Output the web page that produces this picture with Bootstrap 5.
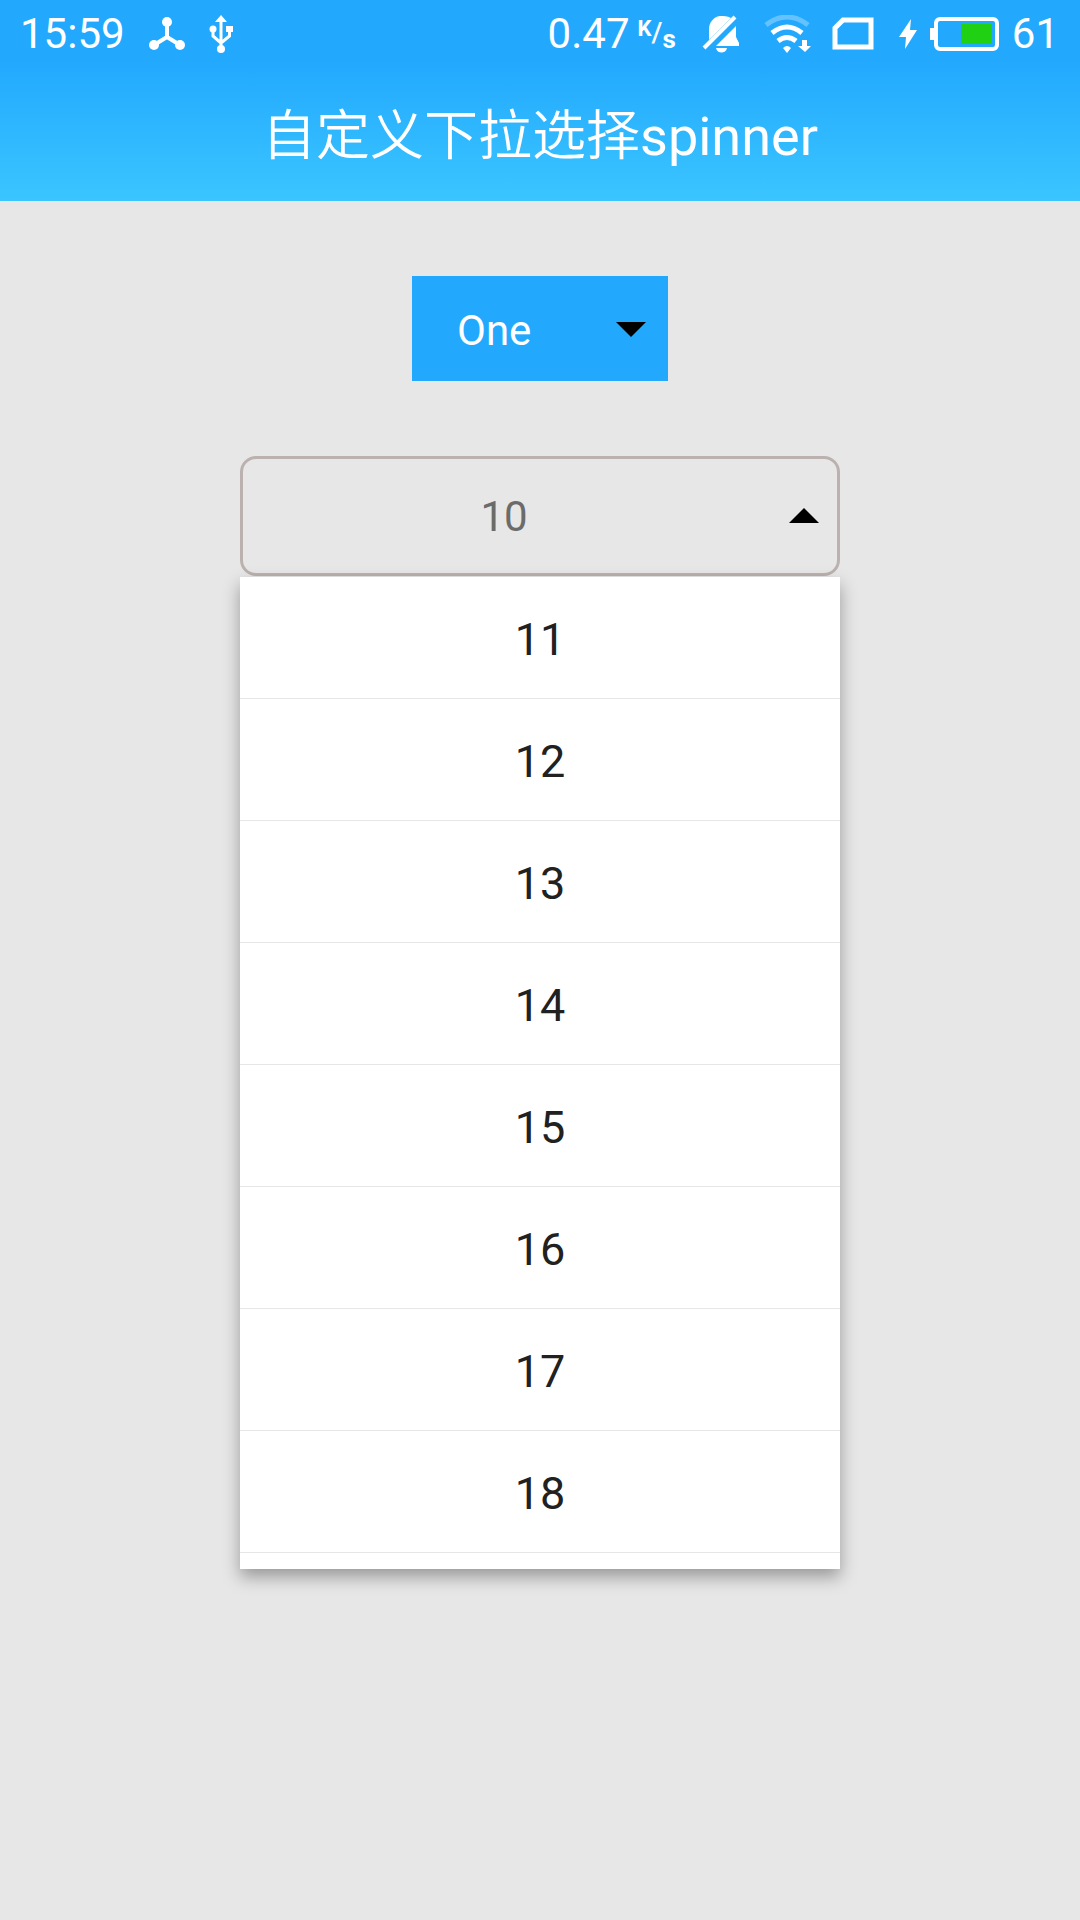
<!DOCTYPE html>
<html lang="zh-CN">
<head>
<meta charset="utf-8">
<meta name="viewport" content="width=device-width, initial-scale=1">
<title>自定义下拉选择spinner</title>
<link href="https://cdn.jsdelivr.net/npm/bootstrap@5.3.0/dist/css/bootstrap.min.css" rel="stylesheet">
<style>
  body { background: #e7e7e7; font-family: Roboto, "Noto Sans CJK SC", sans-serif; font-size: 42px; }
  .app-header { background: linear-gradient(#22a9fe 30%, #3bc5ff); color: #fff; }
  .status-bar { height: 68px; line-height: 68px; padding: 0 21px 0 20px; }
  .status-bar svg { flex: none; }
  .rate-unit { line-height: 24px; font-size: 22px; font-weight: 700; margin-right: 2px; }
  .rate-slash { font-size: 28px; font-weight: 500; padding-top: 4px; }
  .rate-low { font-size: 26px; padding-top: 10px; }
  .gap-sim { margin-left: 20px; }
  .gap-battery { margin-left: 12px; }
  .app-title { font-size: 54px; line-height: 64px; padding: 37px 0 32px; }
  .app-title .cjk { font-weight: 350; }
  .content-area { padding: 75px 0; gap: 75px; }
  .spinner-blue { width: 256px; height: 105px; padding: 4px 80px 0 45px; border: 0; border-radius: 0;
    appearance: none; background: #22a9fe; color: #fff; font-size: 42px; line-height: 100px; }
  .arrow-over { right: 22px; top: 46px; pointer-events: none; }
  .picker { width: 600px; }
  .picker-toggle { height: 120px; padding: 0 18px 2px 0; border: 3px solid #bbb2b0; border-radius: 16px;
    background: transparent; color: #6b6b6b; font-size: 42px; line-height: 108px; }
  .picker-value { padding: 4px 24px 0 0; }
  .picker-list { height: 992px; margin-top: 1px; border-radius: 0; background: #fff;
    box-shadow: 0 8px 16px rgba(0, 0, 0, .34); overflow: hidden; }
  .picker-list .list-group-item { flex: none; height: 122px; padding: 5px 0 0; border: 0; border-bottom: 1px solid #e6e6e6;
    color: #212121; font-size: 45px; line-height: 116px; }
</style>
</head>
<body>
<header class="app-header">
  <div class="status-bar d-flex align-items-center justify-content-between">
    <div class="d-flex align-items-center">
      <span>15:59</span>
      <svg class="ms-4" width="36" height="34" viewBox="0 0 36 34" fill="#fff"><path d="M18 5v15M18 20L5 28M18 20l13 8" stroke="#fff" stroke-width="4"/><circle cx="18" cy="5" r="5"/><circle cx="5" cy="28" r="5"/><circle cx="31" cy="28" r="5"/></svg>
      <svg class="ms-4" width="24" height="38" viewBox="0 0 24 38" fill="#fff"><path d="M12 0l6 7H6z"/><circle cx="12" cy="34" r="4"/><circle cx="4" cy="14" r="3.500"/><path d="M17 11h7v6h-7z"/><path d="M12 5v28M4 14v7l8 7M20.500 15v6l-8.500 7" fill="none" stroke="#fff" stroke-width="3"/></svg>
    </div>
    <div class="d-flex align-items-center">
      <span>0.47</span>
      <span class="rate-unit d-flex ms-2 align-items-start"><span>K</span><span class="rate-slash">/</span><span class="rate-low">s</span></span>
      <svg class="ms-4" width="38" height="38" viewBox="0 0 38 38" fill="#fff"><path d="M7 25L29 3C25 1 22 1 18 1C11 2 7 8 7 14Z"/><path d="M34 11L14 31H37V28L34 22Z"/><path d="M14 33h11c-1 6-10 6-11 0z"/><path d="M2 33L33 2" stroke="#fff" stroke-width="4"/></svg>
      <svg class="ms-4" width="48" height="38" viewBox="0 0 48 38" fill="none" stroke="#fff"><path d="M2 10Q23-6 44 10" stroke-width="5" opacity=".3"/><path d="M8 18Q23 6 38 18" stroke-width="5"/><path d="M14 26Q23 19 32 26" stroke-width="5"/><path d="M19 33q4-4 8 0l-4 5z" fill="#fff" stroke="none"/><path d="M38 25h5v6h4l-6 6-7-6h4z" fill="#fff" stroke="none"/></svg>
      <svg class="gap-sim" width="42" height="34" viewBox="0 0 42 34" fill="none" stroke="#fff" stroke-width="5"><path d="M11 3h28v27H3V11z"/></svg>
      <svg class="ms-4" width="20" height="30" viewBox="0 0 20 30" fill="#fff"><path d="M13 0L1 18h7L7 30 19 11h-7z"/></svg>
      <svg class="gap-battery" width="70" height="34" viewBox="0 0 70 34"><rect x="6" y="2" width="61" height="30" rx="4" fill="none" stroke="#fff" stroke-width="4"/><path d="M0 11h5v12H0z" fill="#fff"/><path d="M31 7h31v20H31z" fill="#20d013"/></svg>
      <span class="gap-battery">61</span>
    </div>
  </div>
  <h1 class="app-title text-center fw-normal mb-0"><span class="cjk">自定义下拉选择</span>spinner</h1>
</header>
<main class="content-area d-flex flex-column align-items-center">
  <div class="position-relative d-flex">
    <select class="spinner-blue" aria-label="One"><option>One</option><option>Two</option><option>Three</option></select>
    <svg class="arrow-over position-absolute" width="30" height="15" viewBox="0 0 30 15"><path d="M0 0h30L15 15z"/></svg>
  </div>
  <div class="picker">
    <button type="button" class="picker-toggle d-flex align-items-center w-100" aria-haspopup="listbox" aria-expanded="true">
      <span class="picker-value flex-grow-1 text-center">10</span>
      <svg width="30" height="15" viewBox="0 0 30 15"><path d="M0 15h30L15 0z"/></svg>
    </button>
    <div class="picker-list list-group">
      <button type="button" class="list-group-item list-group-item-action text-center">11</button>
      <button type="button" class="list-group-item list-group-item-action text-center">12</button>
      <button type="button" class="list-group-item list-group-item-action text-center">13</button>
      <button type="button" class="list-group-item list-group-item-action text-center">14</button>
      <button type="button" class="list-group-item list-group-item-action text-center">15</button>
      <button type="button" class="list-group-item list-group-item-action text-center">16</button>
      <button type="button" class="list-group-item list-group-item-action text-center">17</button>
      <button type="button" class="list-group-item list-group-item-action text-center">18</button>
    </div>
  </div>
</main>
<script src="https://cdn.jsdelivr.net/npm/bootstrap@5.3.0/dist/js/bootstrap.bundle.min.js"></script>
</body>
</html>
